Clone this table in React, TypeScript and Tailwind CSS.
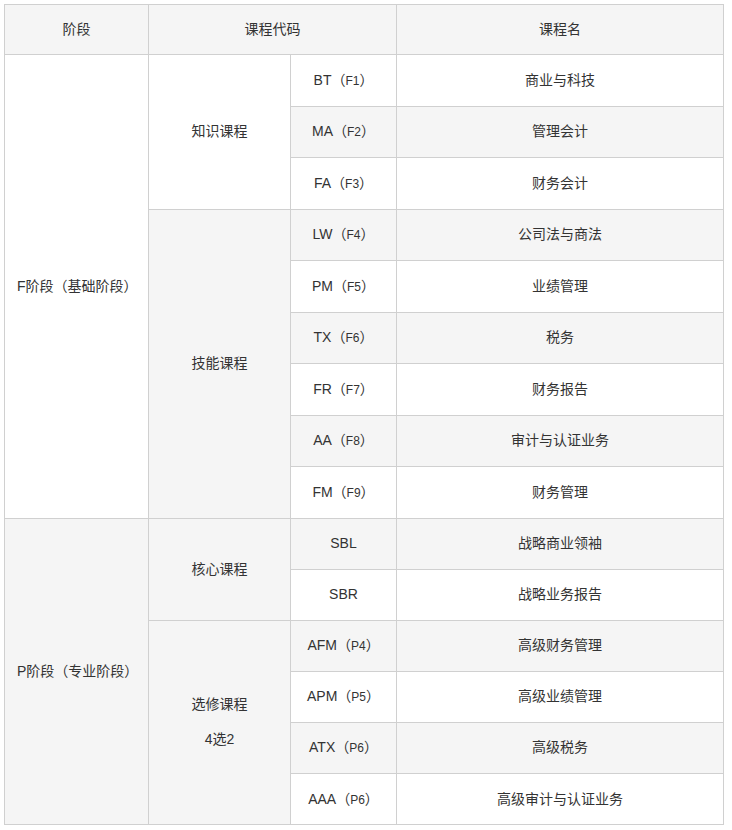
import React from "react";

type Row = { code: string; sub?: string; name: string };

const cell = "border border-[#d0d0d0] text-center align-middle";

function Code({ code, sub }: { code: string; sub?: string }) {
  return (
    <span>
      {code}
      {sub && (
        <>
          （<span className="text-[12px]">{sub}</span>）
        </>
      )}
    </span>
  );
}

const fRows: Row[] = [
  { code: "BT", sub: "F1", name: "商业与科技" },
  { code: "MA", sub: "F2", name: "管理会计" },
  { code: "FA", sub: "F3", name: "财务会计" },
  { code: "LW", sub: "F4", name: "公司法与商法" },
  { code: "PM", sub: "F5", name: "业绩管理" },
  { code: "TX", sub: "F6", name: "税务" },
  { code: "FR", sub: "F7", name: "财务报告" },
  { code: "AA", sub: "F8", name: "审计与认证业务" },
  { code: "FM", sub: "F9", name: "财务管理" },
];

const pRows: Row[] = [
  { code: "SBL", name: "战略商业领袖" },
  { code: "SBR", name: "战略业务报告" },
  { code: "AFM", sub: "P4", name: "高级财务管理" },
  { code: "APM", sub: "P5", name: "高级业绩管理" },
  { code: "ATX", sub: "P6", name: "高级税务" },
  { code: "AAA", sub: "P6", name: "高级审计与认证业务" },
];

export default function App() {
  const rowBg = (i: number) => (i % 2 === 0 ? "bg-white" : "bg-[#f5f5f5]");
  return (
    <div
      className="bg-white p-[4px] text-[14px] text-[#333]"
      style={{ fontFamily: '"Liberation Sans", "Noto Sans CJK SC", sans-serif' }}
    >
      <table className="w-[719px] table-fixed border-collapse">
        <colgroup>
          <col className="w-[144px]" />
          <col className="w-[142px]" />
          <col className="w-[106px]" />
          <col className="w-[327px]" />
        </colgroup>
        <tbody>
          <tr className="h-[50px] bg-[#f5f5f5]">
            <td className={cell}>阶段</td>
            <td className={cell} colSpan={2}>课程代码</td>
            <td className={cell}>课程名</td>
          </tr>
          {fRows.map((r, i) => (
            <tr key={r.code} className={`h-[51.5px] ${rowBg(i)}`}>
              {i === 0 && (
                <td className="border border-[#d0d0d0] pl-[12px] text-left align-middle" rowSpan={9}>
                  F阶段（基础阶段）
                </td>
              )}
              {i === 0 && (
                <td className={cell} rowSpan={3}>知识课程</td>
              )}
              {i === 3 && (
                <td className={cell} rowSpan={6}>技能课程</td>
              )}
              <td className={cell}>
                <Code code={r.code} sub={r.sub} />
              </td>
              <td className={cell}>{r.name}</td>
            </tr>
          ))}
          {pRows.map((r, i) => (
            <tr key={r.code + i} className={`h-[51.1px] ${rowBg(i + 1)}`}>
              {i === 0 && (
                <td className="border border-[#d0d0d0] pl-[12px] text-left align-middle" rowSpan={6}>
                  P阶段（专业阶段）
                </td>
              )}
              {i === 0 && (
                <td className={cell} rowSpan={2}>核心课程</td>
              )}
              {i === 2 && (
                <td className={cell} rowSpan={4}>
                  <div className="flex flex-col items-center gap-[14px]">
                    <p>选修课程</p>
                    <p>4选2</p>
                  </div>
                </td>
              )}
              <td className={cell}>
                <Code code={r.code} sub={r.sub} />
              </td>
              <td className={cell}>{r.name}</td>
            </tr>
          ))}
        </tbody>
      </table>
    </div>
  );
}
